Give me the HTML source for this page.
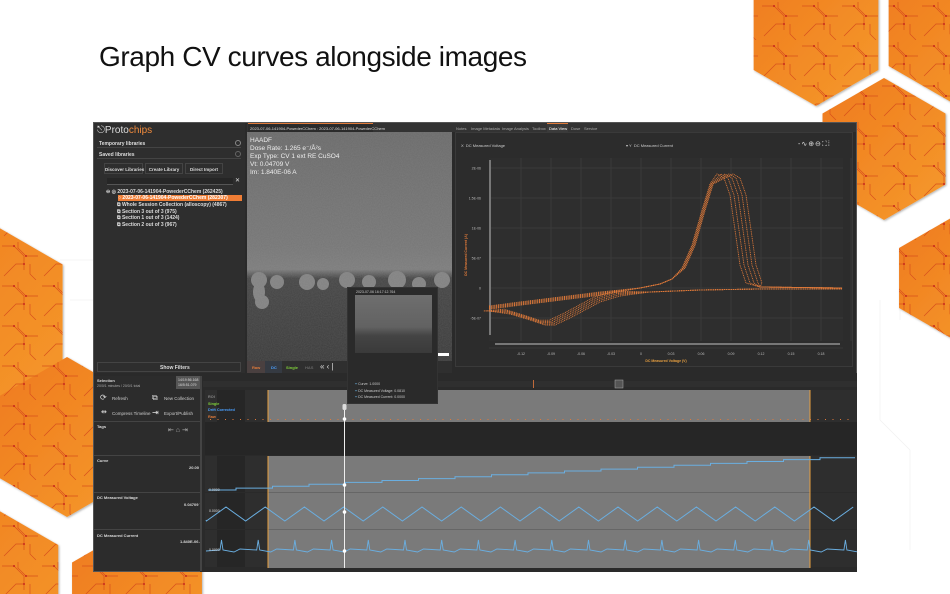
<!DOCTYPE html>
<html><head><meta charset="utf-8">
<style>
*{margin:0;padding:0;box-sizing:border-box}
html,body{width:950px;height:594px;overflow:hidden}
body{background:#fff;position:relative;font-family:"Liberation Sans",sans-serif}
.a{position:absolute}
.t{font-size:5px;color:#ddd;white-space:nowrap;font-weight:bold}
h1{position:absolute;left:99px;top:41px;font-weight:normal;font-size:28px;color:#111;letter-spacing:-0.4px;white-space:nowrap}
.tab{position:absolute;top:126px;font-size:4px;color:#aaa;white-space:nowrap}
</style></head><body>
<svg class="a" style="left:0;top:0" width="950" height="594">
<defs>
<linearGradient id="og" x1="0" y1="0" x2="1" y2="1"><stop offset="0" stop-color="#ef7a1e"/><stop offset="1" stop-color="#f59a2c"/></linearGradient>
<pattern id="pc" width="40" height="40" patternUnits="userSpaceOnUse"><path d="M2 6h12l10 10v14M18 2v6l8 8h12M4 36l12-12h8M30 24v10l6 6" stroke="#d8501c" stroke-width="0.7" fill="none"/><circle cx="14" cy="6" r="1" fill="#c8281a"/><circle cx="26" cy="16" r="1" fill="#c8281a"/><circle cx="24" cy="24" r="1" fill="#c8281a"/></pattern>
<filter id="sh"><feDropShadow dx="1" dy="1" stdDeviation="1" flood-opacity="0.3"/></filter>
</defs>
<g stroke="#eee" stroke-width="0.7" fill="none" opacity="0.8"><path d="M880 300v120l30 30v100M900 260v60M60 260h40M70 300h30"/></g>
<g id="hx" filter="url(#sh)"></g>
</svg>
<h1>Graph CV curves alongside images</h1>

<div class="a" style="left:93px;top:122px;width:764px;height:450px;background:#2a2a2a;border:1px solid #555"></div>
<!-- left panel -->
<div class="a" style="left:94px;top:123px;width:151px;height:250px;background:#2e2e2e"></div>
<div class="a" style="left:97px;top:125px;font-size:10px;color:#ddd">&#9099;Proto<span style="color:#f08a3c">chips</span></div>
<div class="a t" style="left:99px;top:141px">Temporary libraries</div>
<div class="a t" style="left:99px;top:152px">Saved libraries</div>
<div class="a" style="left:235px;top:140px;width:6px;height:6px;border:1px solid #888;border-radius:50%"></div>
<div class="a" style="left:235px;top:151px;width:6px;height:6px;border:1px solid #666;border-radius:50%"></div>
<div class="a" style="left:97px;top:147px;width:144px;height:1px;background:#444"></div>
<div class="a" style="left:97px;top:158px;width:144px;height:1px;background:#444"></div>
<div class="a t" style="left:104px;top:163px;width:39px;height:11px;border:1px solid #444;padding-top:3px;text-align:center;font-size:4.5px">Discover Libraries</div>
<div class="a t" style="left:145px;top:163px;width:38px;height:11px;border:1px solid #444;padding-top:3px;text-align:center;font-size:4.5px">Create Library</div>
<div class="a t" style="left:185px;top:163px;width:38px;height:11px;border:1px solid #444;padding-top:3px;text-align:center;font-size:4.5px">Direct Import</div>
<div class="a" style="left:107px;top:178px;width:126px;height:7px;background:#262626;border-bottom:1px solid #555"></div>
<div class="a" style="left:235px;top:177px;color:#ddd;font-size:6px">✕</div>
<div class="a t" style="left:106px;top:189px">⊖ ◎ 2023-07-06-141904-PowederCChem (262425)</div>
<div class="a" style="left:118px;top:195px;width:124px;height:6px;background:#ef7d35"></div>
<div class="a t" style="left:118px;top:195px;color:#fff">○ 2023-07-06-141904-PowederCChem (282307)</div>
<div class="a t" style="left:117px;top:202px">⧉ Whole Session Collection (alloscopy) (4867)</div>
<div class="a t" style="left:117px;top:209px">⧉ Section 3 out of 3 (975)</div>
<div class="a t" style="left:117px;top:215px">⧉ Section 1 out of 3 (1424)</div>
<div class="a t" style="left:117px;top:222px">⧉ Section 2 out of 3 (967)</div>
<div class="a" style="left:97px;top:362px;width:144px;height:10px;border:1px solid #444"></div>
<div class="a t" style="left:160px;top:365px">Show Filters</div>

<!-- image panel -->
<div class="a" style="left:247px;top:123px;width:205px;height:9px;background:#333"></div>
<div class="a" style="left:248px;top:123px;width:125px;height:9px;background:#2b2b2b;border-top:1px solid #e07a3a"></div>
<div class="a t" style="left:250px;top:126px;font-size:4px;font-weight:normal">2023-07-06-141904-PowederCChem : 2023-07-06-141904-PowederCChem</div>
<svg class="a" style="left:247px;top:132px" width="205" height="229">
<defs><filter id="nz"><feTurbulence type="fractalNoise" baseFrequency="0.9" numOctaves="2" seed="3"/><feColorMatrix values="0 0 0 0 0.5  0 0 0 0 0.5  0 0 0 0 0.5  0 0 0 0.5 0"/></filter>
<linearGradient id="ig" x1="0" y1="0" x2="0" y2="1"><stop offset="0" stop-color="#6a6a6a"/><stop offset="0.5" stop-color="#767676"/><stop offset="0.6" stop-color="#7c7c7c"/><stop offset="0.64" stop-color="#444"/><stop offset="1" stop-color="#3a3a3a"/></linearGradient></defs>
<rect width="205" height="229" fill="url(#ig)"/>
<g fill="#828282"><circle cx="12" cy="148" r="8"/><circle cx="30" cy="150" r="7"/><circle cx="60" cy="150" r="8"/><circle cx="76" cy="152" r="6"/><circle cx="100" cy="148" r="8"/><circle cx="122" cy="150" r="7"/><circle cx="150" cy="148" r="9"/><circle cx="172" cy="152" r="7"/><circle cx="195" cy="148" r="8"/><circle cx="15" cy="170" r="7"/><ellipse cx="12" cy="160" rx="6" ry="10"/></g>
<rect width="205" height="229" filter="url(#nz)" opacity="0.35"/>
<rect x="190" y="221" width="12" height="3" fill="#fff"/>
</svg>
<div class="a" style="left:250px;top:137px;font-size:6.5px;color:#eee;line-height:8px">HAADF<br>Dose Rate: 1.265 e⁻/Å²s<br>Exp Type: CV 1 ext RE CuSO4<br>Vt: 0.04709 V<br>Im: 1.840E-06 A</div>
<div class="a" style="left:247px;top:361px;width:205px;height:12px;background:#2f2f2f"></div>
<div class="a" style="left:247px;top:361px;width:18px;height:12px;background:#4a4040"></div>
<div class="a t" style="left:252px;top:365px;color:#e07a3a;font-size:4px">Raw</div>
<div class="a" style="left:265px;top:361px;width:17px;height:12px;background:#353a42"></div>
<div class="a t" style="left:271px;top:365px;color:#4aa0ff;font-size:4px">DC</div>
<div class="a t" style="left:286px;top:365px;color:#7fd03a;font-size:4px">Single</div>
<div class="a t" style="left:305px;top:365px;color:#666;font-size:4px">HAS</div>
<div class="a" style="left:320px;top:362px;color:#ddd;font-size:8px">« ‹ |</div>

<!-- right data view -->
<div class="a" style="left:452px;top:123px;width:404px;height:9px;background:#333"></div>
<span class="tab" style="left:456px">Notes</span>
<span class="tab" style="left:471px">Image Metadata</span>
<span class="tab" style="left:502px">Image Analysis</span>
<span class="tab" style="left:532px">Toolbox</span>
<div class="a" style="left:547px;top:123px;width:21px;height:9px;background:#3a3a3a;border-top:1px solid #e07a3a"></div>
<span class="tab" style="left:549px;color:#fff">Data View</span>
<span class="tab" style="left:571px">Dose</span>
<span class="tab" style="left:584px">Service</span>
<div class="a" style="left:455px;top:132px;width:398px;height:235px;background:#2c2c2c;border:1px solid #3a3a3a"></div>
<div class="a" style="left:461px;top:143px;font-size:4px;color:#ccc">X &nbsp;DC Measured Voltage</div>
<div class="a" style="left:626px;top:143px;font-size:4px;color:#ccc">▾ Y &nbsp;DC Measured Current</div>
<div class="a" style="left:798px;top:140px;font-size:7px;color:#ddd;letter-spacing:1px">‐∿⊕⊖⛶⁞</div>
<svg class="a" style="left:455px;top:150px" width="400" height="215" id="cv"></svg>

<!-- bottom -->
<div class="a" style="left:94px;top:376px;width:106px;height:195px;background:#2c2c2c"></div>
<div class="a t" style="left:97px;top:378px;font-size:4px">Selection</div>
<div class="a" style="left:97px;top:384px;font-size:3.5px;color:#aaa">20/0/1 minutes / 20/0/1 total</div>
<div class="a" style="left:176px;top:376px;width:24px;height:13px;background:#555"></div>
<div class="a" style="left:178px;top:378px;font-size:3.5px;color:#ddd;line-height:5px">14/19:56.168<br>16/5:51.079</div>
<div class="a" style="left:100px;top:393px;font-size:8px;color:#ddd">⟳</div>
<div class="a" style="left:112px;top:396px;font-size:4.5px;color:#ccc">Refresh</div>
<div class="a" style="left:152px;top:393px;font-size:8px;color:#ddd">⧉</div>
<div class="a" style="left:164px;top:396px;font-size:4.5px;color:#ccc">New Collection</div>
<div class="a" style="left:101px;top:408px;font-size:7px;color:#ddd">⇹</div>
<div class="a" style="left:112px;top:411px;font-size:4.5px;color:#ccc">Compress Timeline</div>
<div class="a" style="left:152px;top:408px;font-size:8px;color:#ddd">⇥</div>
<div class="a" style="left:164px;top:411px;font-size:4.5px;color:#ccc">Export/Publish</div>
<div class="a" style="left:94px;top:421px;width:106px;height:1px;background:#444"></div>
<div class="a t" style="left:97px;top:424px;font-size:4px">Tags</div>
<div class="a" style="left:168px;top:426px;font-size:7px;color:#aaa">⇤ ⌂ ⇥</div>
<div class="a" style="left:94px;top:455px;width:106px;height:1px;background:#444"></div>
<div class="a t" style="left:97px;top:458px;font-size:4px">Curve</div>
<div class="a t" style="left:189px;top:465px;font-size:4px">20.00</div>
<div class="a" style="left:94px;top:492px;width:106px;height:1px;background:#444"></div>
<div class="a t" style="left:97px;top:495px;font-size:4px">DC Measured Voltage</div>
<div class="a t" style="left:184px;top:502px;font-size:4px">0.04709 V</div>
<div class="a" style="left:94px;top:529px;width:106px;height:1px;background:#444"></div>
<div class="a t" style="left:97px;top:533px;font-size:4px">DC Measured Current</div>
<div class="a t" style="left:180px;top:539px;font-size:4px">1.840E-06 A</div>
<svg class="a" style="left:200px;top:373px" width="657" height="199" id="tl"></svg>

<!-- tooltip -->
<div class="a" style="left:347px;top:287px;width:91px;height:117px;background:#2a2a2a;border:1px solid #333"></div>
<div class="a" style="left:356px;top:290px;font-size:3.5px;color:#ccc">2023-07-06 16:17:12.764</div>
<div class="a" style="left:355px;top:295px;width:77px;height:58px;background:linear-gradient(#6e6e6e,#626262 55%,#444 70%,#3a3a3a)"></div>
<div class="a" style="left:355px;top:381px;font-size:3.5px;color:#ccc;line-height:6.5px"><span style="color:#6ab0e0">━</span> Curve: 1.0000<br><span style="color:#6ab0e0">━</span> DC Measured Voltage: 0.0810<br><span style="color:#6ab0e0">━</span> DC Measured Current: 0.0000</div>

<script>
const NS="http://www.w3.org/2000/svg";
function el(p,t,a){const e=document.createElementNS(NS,t);for(const k in a)e.setAttribute(k,a[k]);p.appendChild(e);return e;}
const hx=document.getElementById('hx');
function hex(cx,cy,r){const w=r*Math.sqrt(3)/2;const pts=[[cx,cy-r],[cx+w,cy-r/2],[cx+w,cy+r/2],[cx,cy+r],[cx-w,cy+r/2],[cx-w,cy-r/2]].map(p=>p.join(',')).join(' ');
el(hx,'polygon',{points:pts,fill:'url(#og)'});el(hx,'polygon',{points:pts,fill:'url(#pc)'});}
hex(816,34,72);hex(951,30,72);hex(884,149,71);hex(951,278,60);
hex(-37,322,115);hex(67,437,80);hex(-37,600,110);hex(137,600,75);
// cv plot
const cv=document.getElementById('cv');const ox=455,oy=150;
el(cv,'rect',{x:34,y:8,width:354,height:183,fill:'#2e2e2e'});
for(let i=0;i<12;i++){const x=66+i*30;el(cv,'line',{x1:x,y1:8,x2:x,y2:191,stroke:'#3e3e3e','stroke-width':0.8});}
for(let j=0;j<7;j++){const y=18+j*30;el(cv,'line',{x1:34,y1:y,x2:388,y2:y,stroke:'#3e3e3e','stroke-width':0.8});}
const yl=[['2E-06',168],['1.5E-06',198],['1E-06',228],['5E-07',258],['0',288],['-5E-07',318]];
yl.forEach(a=>{const t=el(cv,'text',{x:26,y:a[1]-oy+1.5,'font-size':3.5,fill:'#bbb','text-anchor':'end','font-family':'Liberation Sans'});t.textContent=a[0];});
const xl=['-0.12','-0.09','-0.06','-0.03','0','0.03','0.06','0.09','0.12','0.15','0.18'];
xl.forEach((s,i)=>{const t=el(cv,'text',{x:521+i*30-ox,y:355-oy,'font-size':3.5,fill:'#bbb','text-anchor':'middle','font-family':'Liberation Sans'});t.textContent=s;});
let t=el(cv,'text',{x:666-ox,y:362-oy,'font-size':3.5,fill:'#e8a040','text-anchor':'middle','font-family':'Liberation Sans','font-weight':'bold'});t.textContent='DC Measured Voltage (V)';
t=el(cv,'text',{x:0,y:0,'font-size':3.5,fill:'#e07a3a','text-anchor':'middle','font-family':'Liberation Sans','font-weight':'bold',transform:`translate(${467-ox},${255-oy}) rotate(-90)`});t.textContent='DC Measured Current (A)';
el(cv,'rect',{x:40,y:193,width:345,height:2,fill:'#777'});
el(cv,'rect',{x:34,y:10,width:2,height:175,fill:'#777'});
const fw=[[489,306],[520,302],[560,297],[600,292],[640,288],[660,284],[672,279],[682,268],[692,245],[702,210],[710,184],[717,174],[724,178],[730,195],[735,230],[740,265],[746,283],[760,287],[842,288]];
const rv=[[842,289],[760,289],[700,290],[650,292],[620,296],[600,302],[585,310],[570,318],[555,325],[545,325],[530,320],[510,314],[489,311]];
for(let k=0;k<5;k++){
 const f=fw.map(p=>{let x=p[0],y=p[1];if(x>=717&&x<=746)x+=k*4;if(x<717&&x>680)x+=k*0.8;if(x==717||x==724)y+=k*2.5;return (x-ox)+','+(y-oy+(x<640?k*0.8:0));}).join(' ');
 el(cv,'polyline',{points:f,fill:'none',stroke:'#e07a3a','stroke-width':0.9,'stroke-dasharray':'1 0.8'});
 const r=rv.map(p=>(p[0]-ox-k*1.5*(p[0]<640?1:0))+','+(p[1]-oy-k*1.2*(p[0]<640&&p[0]>500?1:0))).join(' ');
 el(cv,'polyline',{points:r,fill:'none',stroke:'#e07a3a','stroke-width':0.9,'stroke-dasharray':'1 0.8'});
}
// timeline
const tl=document.getElementById('tl');const X=v=>v-200,Y=v=>v-373;
el(tl,'rect',{x:0,y:0,width:657,height:199,fill:'#2a2a2a'});
el(tl,'rect',{x:3,y:8,width:654,height:6,fill:'#2f2f2f'});
el(tl,'rect',{x:X(205),y:Y(390),width:652,height:32,fill:'#2e2e2e'});
el(tl,'rect',{x:X(217),y:Y(390),width:28,height:32,fill:'#262626'});
[[456,493],[493,530],[530,568]].forEach(r=>{el(tl,'rect',{x:X(205),y:Y(r[0]),width:652,height:r[1]-r[0]-1,fill:'#2e2e2e'});el(tl,'rect',{x:X(217),y:Y(r[0]),width:28,height:r[1]-r[0]-1,fill:'#262626'});});
el(tl,'rect',{x:X(268),y:Y(390),width:542,height:32,fill:'#7a7a7a'});
el(tl,'rect',{x:X(268),y:Y(456),width:542,height:112,fill:'#7a7a7a'});
el(tl,'line',{x1:X(268),y1:Y(492.5),x2:X(810),y2:Y(492.5),stroke:'#666'});
el(tl,'line',{x1:X(268),y1:Y(529.5),x2:X(810),y2:Y(529.5),stroke:'#666'});
el(tl,'rect',{x:X(205),y:Y(422),width:652,height:33,fill:'#262626'});
[268,810].forEach(x=>{el(tl,'line',{x1:X(x),y1:Y(390),x2:X(x),y2:Y(422),stroke:'#e8a040','stroke-width':1});el(tl,'line',{x1:X(x),y1:Y(456),x2:X(x),y2:Y(568),stroke:'#e8a040','stroke-width':1});});
for(let x=210;x<855;x+=7.5)el(tl,'rect',{x:X(x),y:Y(419),width:1,height:1,fill:'#e07a3a'});
el(tl,'rect',{x:X(533),y:Y(380),width:1,height:8,fill:'#c06a3a'});
el(tl,'rect',{x:X(615),y:Y(380),width:8,height:8,fill:'#555',stroke:'#aaa','stroke-width':0.5});
[['ROI',398,'#888'],['Single',405,'#7fd03a'],['Drift Corrected',411,'#4aa0ff'],['Raw',418,'#e07a3a']].forEach(a=>{const t=el(tl,'text',{x:X(208),y:Y(a[1]),'font-size':3.8,fill:a[2],'font-family':'Liberation Sans','font-weight':'bold'});t.textContent=a[0];});
let d='M'+X(208)+' '+Y(490);let y=490;for(let x=236;x<855;x+=36.5){d+=' H'+X(x)+' V'+Y(y-0.5);y-=1.9;d+=' V'+Y(y);}d+=' H'+X(855);
el(tl,'path',{d:d,fill:'none',stroke:'#6aaee0','stroke-width':1});
let pts=[];pts.push([206,520]);for(let k=-1;k<17;k++){const px=226+39.2*k;pts.push([px,507]);pts.push([px+19.6,521]);}
el(tl,'polyline',{points:pts.filter(p=>p[0]>=205&&p[0]<=857).map(p=>X(p[0])+','+Y(p[1])).join(' '),fill:'none',stroke:'#6aaee0','stroke-width':1});
d='M'+X(206)+' '+Y(551);for(let x=220;x<855;x+=36.7){d+=` L${X(x)} ${Y(550)} L${X(x+1.5)} ${Y(540)} L${X(x+3)} ${Y(550)} L${X(x+14)} ${Y(552)} L${X(x+20)} ${Y(549)}`;}d+=' L'+X(857)+' '+Y(550);
el(tl,'path',{d:d,fill:'none',stroke:'#6aaee0','stroke-width':0.9});
[['0.0000',491],['0.0000',512],['0.0000',551]].forEach(a=>{const t=el(tl,'text',{x:X(209),y:Y(a[1]),'font-size':3.5,fill:'#ddd','font-family':'Liberation Sans'});t.textContent=a[0];});
el(tl,'line',{x1:X(344.5),y1:Y(404),x2:X(344.5),y2:Y(568),stroke:'#eee','stroke-width':1});
el(tl,'rect',{x:X(342.5),y:Y(404),width:4,height:6,rx:1.5,fill:'#ddd'});
[419,485,512,551].forEach(v=>el(tl,'circle',{cx:X(344.5),cy:Y(v),r:1.8,fill:'#fff'}));
el(tl,'rect',{x:X(200),y:Y(376),width:2,height:195,fill:'#444'});
</script>
</body></html>
